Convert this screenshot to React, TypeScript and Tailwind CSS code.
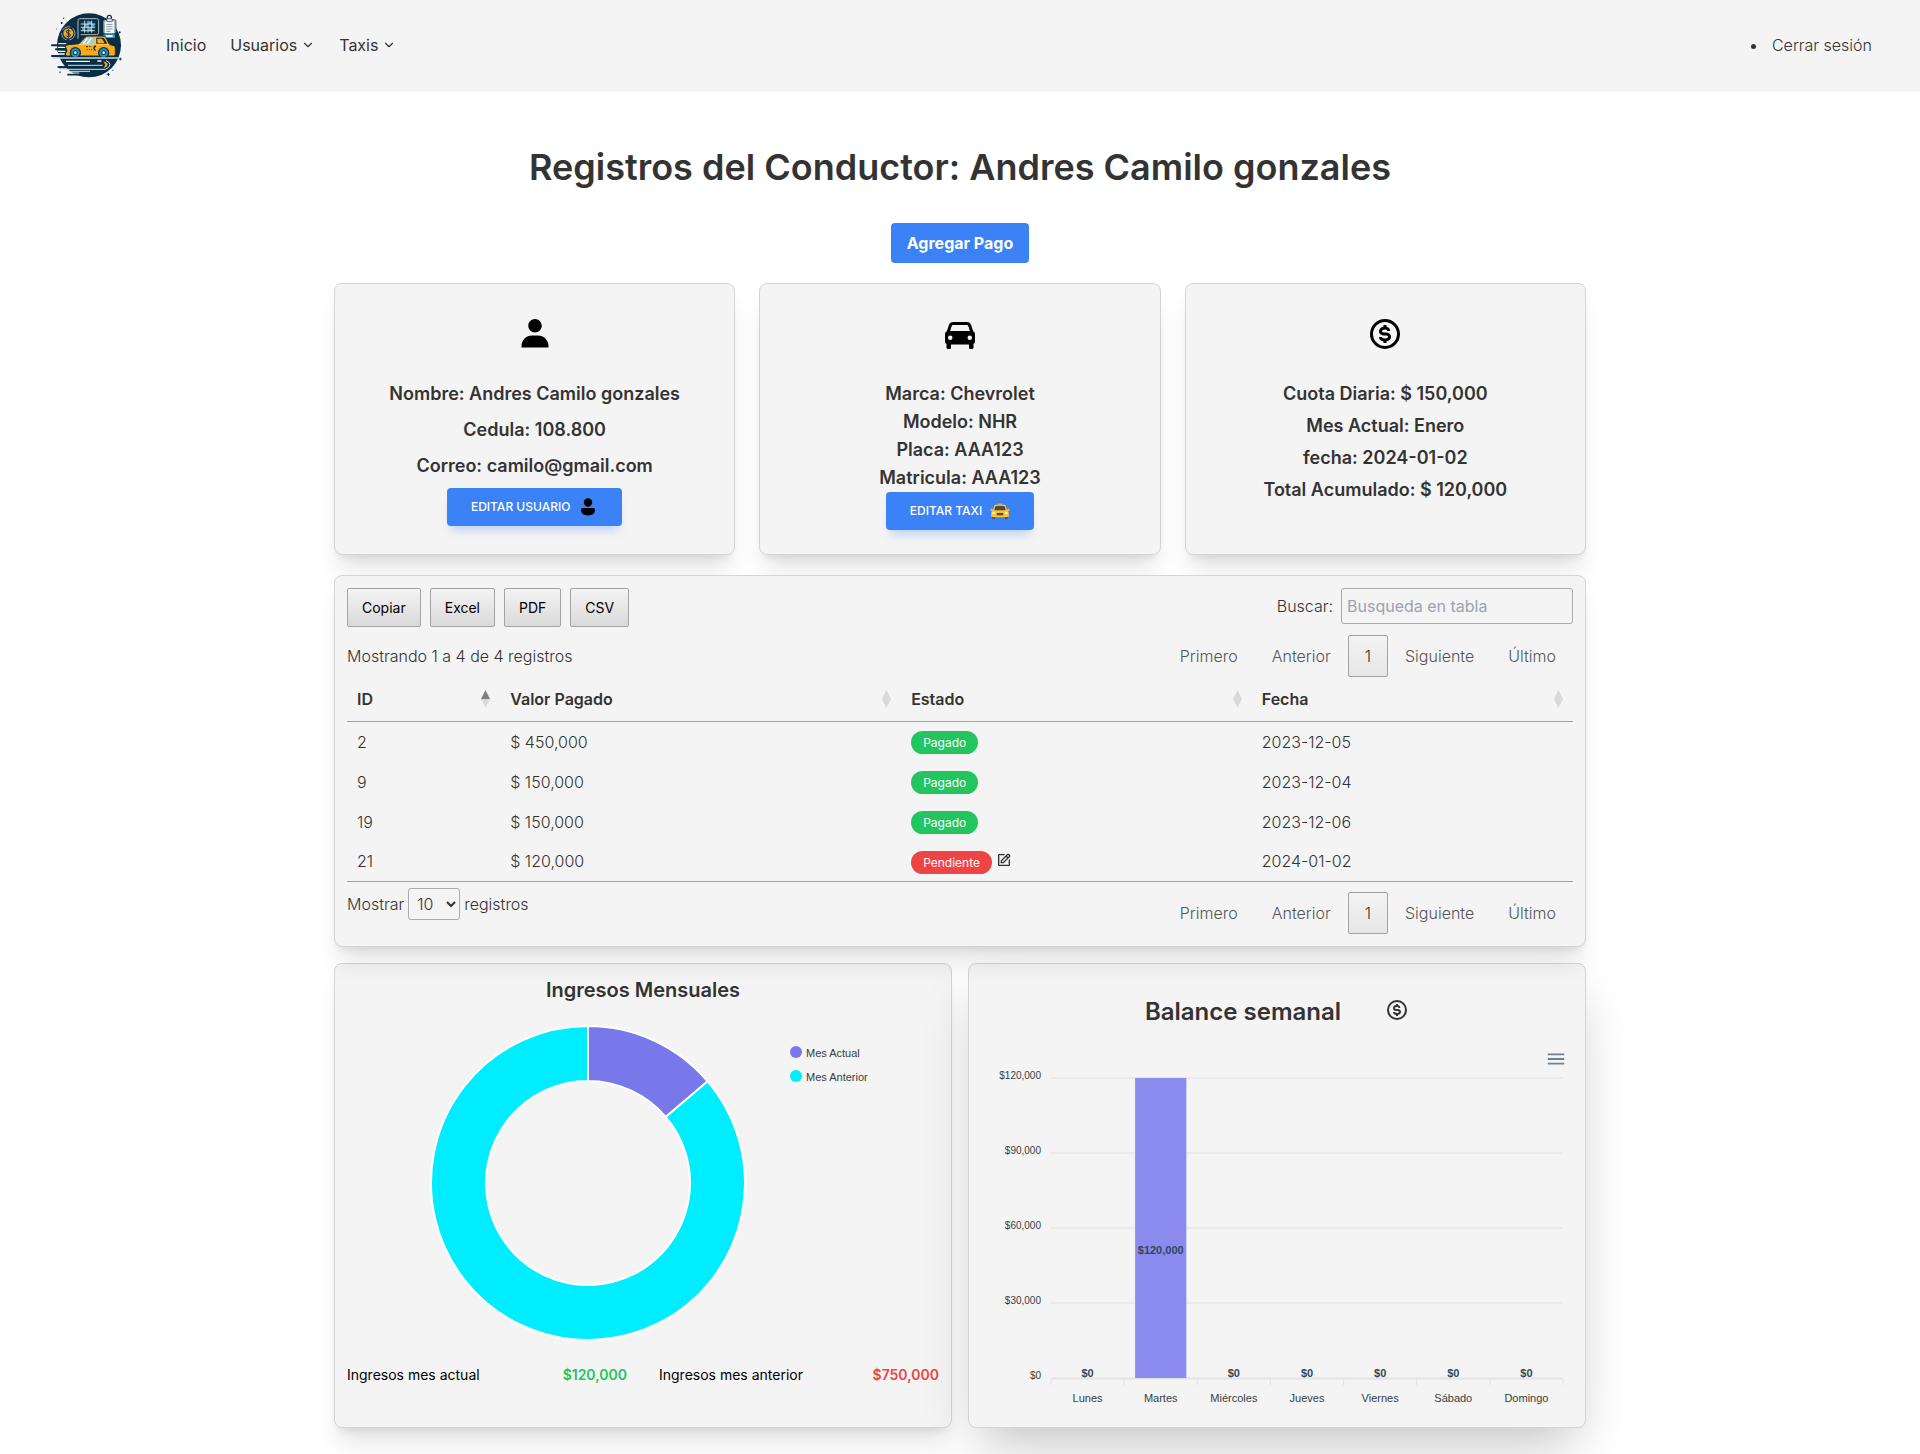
import type { ReactNode } from "react";
import { BiDollarCircle, BiEdit, BiSolidCar, BiSolidUser } from "react-icons/bi";
import { MdMenu } from "react-icons/md";
import { ChevronDown } from "lucide-react";

function Logo() {
  return (
    <svg viewBox="24 30 234 210" className="h-[70px] w-[78px]" role="img" aria-label="Logo">
      <circle cx="147" cy="136" r="96" fill="#0a2e44" />
      {/* map panel */}
      <path d="M114 116V62q0-6 6-6h50q6 0 6 6v36q0 6-6 6h-48" fill="#0a2e44" stroke="#a9bcc6" strokeWidth="3" />
      <rect x="124" y="64" width="40" height="32" fill="#123f58" />
      <path d="M134 72h8v8h-8zM146 64h8v8h-8zM156 72h8v8h-8zM146 84h8v10h-8zM126 84h7v7h-7z" fill="#3fa9d0" />
      <path d="M122 72h44M122 82h44M122 92h42M134 62v36M144 62v36M155 62v36" stroke="#e7eef1" strokeWidth="2.5" />
      {/* clipboard */}
      <path d="M202 56v-4a6 6 0 0 1 12 0v4" fill="none" stroke="#0a2e44" strokeWidth="4" />
      <rect x="189" y="59" width="39" height="42" rx="5" fill="#9fb2bd" stroke="#0a2e44" strokeWidth="2" />
      <rect x="195" y="64" width="27" height="36" rx="2" fill="#fff" />
      <rect x="200" y="56" width="17" height="9" rx="3" fill="#dfe7ea" stroke="#0a2e44" strokeWidth="2" />
      <path d="M199 73h19M199 80h19M199 87h19M199 94h12" stroke="#5f7886" strokeWidth="2.5" />
      <rect x="190" y="103" width="35" height="11" rx="3" fill="#2f9fc9" />
      <rect x="198" y="105" width="20" height="6" fill="#e7f4f9" />
      {/* coin */}
      <circle cx="85" cy="100" r="20" fill="none" stroke="#8fa6b2" strokeWidth="3" strokeDasharray="28 8" />
      <circle cx="85" cy="100" r="16" fill="#f7a81b" stroke="#0a2e44" strokeWidth="2" />
      <path d="M91 95q-2-4-6-4-6 0-6 4 0 4 6 5t6 5q0 5-6 5-5 0-7-4M85 88v25" fill="none" stroke="#0a2e44" strokeWidth="3" />
      {/* speed lines */}
      <path d="M36 136h44M48 148h26M36 168h50" stroke="#0a2e44" strokeWidth="6" strokeLinecap="round" />
      <path d="M54 142h22M54 154h22M54 162h20" stroke="#fff" strokeWidth="4" />
      <path d="M55 131h24" stroke="#fff" strokeWidth="3" />
      {/* car */}
      <path d="M76 139q2-5 10-5l31-3 18-19q4-4 10-4h44q6 0 9 5l10 20 14 4q4 2 4 8v18q0 5-5 5H82q-6 0-6-6l5-9z" fill="#fbab18" stroke="#0a2e44" strokeWidth="3" />
      <path d="M122 132l16-17q2-2 5-2h20v19z" fill="#8fd3ec" />
      <path d="M169 113h19q4 0 6 4l8 15h-33z" fill="#0a2e44" />
      <path d="M172 116h14l8 14h-22z" fill="#fbab18" />
      <path d="M130 131l12-17M142 131l12-17" stroke="#fff" strokeWidth="4" />
      <path d="M166 111v20M118 133h90" stroke="#ffe0a0" strokeWidth="2" />
      <path d="M138 140h6M148 140h4M140 149h3M147 149h3M154 149h3" stroke="#0a2e44" strokeWidth="3" />
      <path d="M168 138q-7 2-6 7 0 5 5 6" fill="none" stroke="#0a2e44" strokeWidth="4" />
      {[106, 191].map((x) => (
        <g key={x}>
          <circle cx={x} cy="158" r="17" fill="#0a2e44" />
          <circle cx={x} cy="158" r="13" fill="#2a8fbb" />
          <circle cx={x} cy="158" r="7" fill="#0a2e44" />
          <circle cx={x} cy="158" r="4" fill="#e7f4f9" />
        </g>
      ))}
      {/* road */}
      <path d="M36 174h200" stroke="#c9d5db" strokeWidth="4" />
      <path d="M78 184h72M172 183h12" stroke="#fff" strokeWidth="4" />
      <path d="M56 202h138q8-2 10-8" fill="none" stroke="#0a2e44" strokeWidth="6" />
      <path d="M84 196h104M60 208h136q12-4 14-14-2-10-12-12" fill="none" stroke="#d7e1e6" strokeWidth="3" />
      <path d="M190 184q12 4 13 10-2 7-12 10l5-10z" fill="#fbab18" />
      <path d="M54 201h52M84 224h34" stroke="#0a2e44" strokeWidth="5" strokeLinecap="round" />
      <path d="M78 214h72M88 219h30" stroke="#d7e1e6" strokeWidth="3" />
      {/* sparkles */}
      <path d="M71 53v4M62 69h6M65 66v6M49 87h2M60 119v4M236 97h6M239 94v6M241 173v8M237 177h8M205 219v9M200 223h9M217 211h3M60 214v5" stroke="#0a2e44" strokeWidth="3" />
    </svg>
  );
}

function UserGlyph() {
  return (
    <svg viewBox="0 0 20 20" className="h-5 w-5" aria-hidden="true">
      <circle cx="10" cy="5.5" r="4.2" fill="#000" />
      <path d="M4.6 11h10.8q1.6 0 1.6 1.8 0 5.6-7 5.6t-7-5.6Q3 11 4.6 11z" fill="#000" />
    </svg>
  );
}

function TaxiGlyph() {
  return (
    <svg viewBox="0 0 20 20" className="h-5 w-5" aria-hidden="true">
      <path d="M2 14.500h3.200v3.200H2zM14.800 14.500h3.200v3.200h-3.200z" fill="#37474f" />
      <rect x="7.800" y="2.200" width="4.400" height="2.400" rx="0.700" fill="#e8a500" />
      <path d="M5.600 3.800h8.800q1 0 1.400 1l1.300 4 .9-.9q1.600-.2 1.600 1-.2 1-1.500 1.100.7.900.7 2v3.200q0 1-1 1H2.200q-1 0-1-1V12q0-1.100.7-2Q.6 9.900.4 8.900q0-1.200 1.600-1l.9.900 1.300-4q.4-1 1.400-1z" fill="#fbc02d" />
      <path d="M6.200 5h7.600q.6 0 .8.600l1.200 3.600H4.200l1.200-3.600q.2-.6.800-.6z" fill="#4a4a42" />
      <circle cx="3.800" cy="12" r="1.300" fill="#fff8e1" />
      <circle cx="16.200" cy="12" r="1.300" fill="#fff8e1" />
      <rect x="6.800" y="12" width="6.400" height="2.200" rx="0.600" fill="#5d4a1a" />
    </svg>
  );
}

const cardBase = "rounded-lg border border-[#d4d4d4] bg-[#f4f4f4]";

function InfoCard({ icon, children }: { icon: ReactNode; children: ReactNode }) {
  return (
    <section className={`${cardBase} flex flex-col items-center p-6 text-lg font-semibold leading-7 shadow-xl`}>
      <div className="mb-5 p-2 text-4xl leading-none text-black">{icon}</div>
      {children}
    </section>
  );
}

function EditButton({ children }: { children: ReactNode }) {
  return (
    <button className="flex h-[38px] items-center gap-2 rounded bg-[#3b82f6] px-6 text-xs font-medium uppercase text-white shadow-[0_8px_9px_-4px_rgba(59,130,246,0.3)]">
      {children}
    </button>
  );
}

function Pagination() {
  return (
    <nav aria-label="Paginación" className="flex text-[#555]">
      <button className="h-[42px] border border-transparent px-4">Primero</button>
      <button className="h-[42px] border border-transparent px-4">Anterior</button>
      <button className="h-[42px] rounded-xs border border-[#a3a3a3] bg-linear-to-b from-[#f3f3f3] to-[#e6e6e6] px-4 text-[#333]">
        1
      </button>
      <button className="h-[42px] border border-transparent px-4">Siguiente</button>
      <button className="h-[42px] border border-transparent px-4">Último</button>
    </nav>
  );
}

function SortMark({ active }: { active: boolean }) {
  return (
    <svg viewBox="0 0 9 18" className="h-[18px] w-[9px]" aria-hidden="true">
      <path d="M4.5 0L9 9H0z" fill={active ? "#7f7f7f" : "#d9d9d9"} />
      <path d="M0 9h9l-4.500 9z" fill="#d9d9d9" />
    </svg>
  );
}

const rows = [
  { id: 2, value: "$ 450,000", paid: true, date: "2023-12-05" },
  { id: 9, value: "$ 150,000", paid: true, date: "2023-12-04" },
  { id: 19, value: "$ 150,000", paid: true, date: "2023-12-06" },
  { id: 21, value: "$ 120,000", paid: false, date: "2024-01-02" },
];

const columns = [
  { name: "ID", width: "w-[12.5%]" },
  { name: "Valor Pagado", width: "w-[32.7%]" },
  { name: "Estado", width: "w-[28.6%]" },
  { name: "Fecha", width: "w-[26.2%]" },
];

function RecordsTable() {
  return (
    <section className={`${cardBase} relative z-10 p-3 shadow-xl`}>
      <div className="flex items-start justify-between">
        <div className="flex gap-[9px]">
          {["Copiar", "Excel", "PDF", "CSV"].map((label) => (
            <button
              key={label}
              className="h-[39px] rounded-xs border border-[#a3a3a3] bg-linear-to-b from-[#f3f3f3] to-[#dadada] px-3.5 text-sm font-normal text-black"
            >
              {label}
            </button>
          ))}
        </div>
        <div className="flex items-center gap-2">
          <label htmlFor="search">Buscar:</label>
          <input
            id="search"
            type="search"
            placeholder="Busqueda en tabla"
            className="h-9 w-[232px] rounded-[3px] border border-[#aaa] bg-transparent px-[5px] font-normal placeholder:text-[#9ca3af]"
          />
        </div>
      </div>
      <div className="mt-2 flex items-center justify-between">
        <p>Mostrando 1 a 4 de 4 registros</p>
        <Pagination />
      </div>
      <table className="w-full table-fixed border-collapse text-left">
        <thead>
          <tr className="border-b border-[#a3a3a3]">
            {columns.map((c, i) => (
              <th key={c.name} className={`${c.width} p-2.5 font-semibold`}>
                <span className="flex items-center justify-between">
                  {c.name}
                  <SortMark active={i === 0} />
                </span>
              </th>
            ))}
          </tr>
        </thead>
        <tbody className="border-b border-[#a3a3a3]">
          {rows.map((r) => (
            <tr key={r.id} className="h-10">
              <td className="px-2.5">{r.id}</td>
              <td className="px-2.5">{r.value}</td>
              <td className="px-2.5">
                <div className="flex items-center gap-1">
                  {r.paid ? (
                    <span className="mt-0.5 rounded-full bg-[#22c55e] px-3 text-xs leading-[23px] font-normal text-white">Pagado</span>
                  ) : (
                    <>
                      <span className="mt-0.5 rounded-full bg-[#ef4444] px-3 text-xs leading-[23px] font-normal text-white">Pendiente</span>
                      <button aria-label="Editar pago" className="mb-0.5">
                        <BiEdit size={16} />
                      </button>
                    </>
                  )}
                </div>
              </td>
              <td className="px-2.5">{r.date}</td>
            </tr>
          ))}
        </tbody>
      </table>
      <div className="flex items-start justify-between">
        <label className="mt-1.5 flex items-center gap-1">
          Mostrar
          <select className="h-8 w-[52px] rounded-[3px] border border-[#aaa] bg-transparent p-1">
            <option>10</option>
            <option>25</option>
          </select>
          registros
        </label>
        <div className="mt-2.5">
          <Pagination />
        </div>
      </div>
    </section>
  );
}

function donutSlice(from: number, to: number) {
  const point = (r: number, a: number) => `${241 + r * Math.sin(a)} ${179 - r * Math.cos(a)}`;
  const large = to - from > Math.PI ? 1 : 0;
  return `M${point(157, from)}A157 157 0 ${large} 1 ${point(157, to)}L${point(102, to)}A102 102 0 ${large} 0 ${point(102, from)}z`;
}

function MonthlyIncome() {
  const split = (120 / 870) * 2 * Math.PI;
  return (
    <section className={`${cardBase} p-3 shadow-xl`}>
      <h2 className="text-center text-xl font-semibold">Ingresos Mensuales</h2>
      <svg viewBox="0 0 592 361" className="w-full font-['Liberation_Sans',sans-serif] font-normal" role="img" aria-label="Ingresos Mensuales">
        <path d={donutSlice(0, split)} fill="#7878ea" stroke="#fff" strokeWidth="2" />
        <path d={donutSlice(split, 2 * Math.PI)} fill="#00edff" stroke="#fff" strokeWidth="2" />
        <circle cx="449" cy="48" r="6" fill="#7878ea" />
        <circle cx="449" cy="72" r="6" fill="#00edff" />
        <g fill="#373d3f" fontSize="11">
          <text x="459" y="53">Mes Actual</text>
          <text x="459" y="77">Mes Anterior</text>
        </g>
      </svg>
      <div className="grid grid-cols-2 gap-8 text-sm font-normal text-black">
        <p className="flex justify-between">
          Ingresos mes actual <span className="font-semibold text-[#22c55e]">$120,000</span>
        </p>
        <p className="flex justify-between">
          Ingresos mes anterior <span className="font-semibold text-[#ef4444]">$750,000</span>
        </p>
      </div>
    </section>
  );
}

const days = ["Lunes", "Martes", "Miércoles", "Jueves", "Viernes", "Sábado", "Domingo"];
const ticks = ["$120,000", "$90,000", "$60,000", "$30,000", "$0"];

function WeeklyBalance() {
  const step = 512 / 7;
  return (
    <section className={`${cardBase} p-3 shadow-2xl`}>
      <div className="mt-5 flex items-center justify-center gap-11">
        <h2 className="text-2xl font-semibold">Balance semanal</h2>
        <BiDollarCircle size={24} className="mb-1" />
      </div>
      <div className="relative mt-4">
        <button aria-label="Menú" className="absolute top-1 right-1.5 text-[#6e8192]">
          <MdMenu size={22} />
        </button>
        <svg viewBox="0 0 592 371" className="w-full font-['Liberation_Sans',sans-serif] font-normal" role="img" aria-label="Balance semanal">
          {ticks.map((t, i) => (
            <g key={t}>
              <path d={`M70 ${34 + i * 75}h512`} stroke="#e0e0e0" />
              <text x="60" y={35 + i * 75} textAnchor="end" fontSize="10" fill="#373d3f">
                {t}
              </text>
            </g>
          ))}
          {[0, 1, 2, 3, 4, 5, 6, 7].map((i) => (
            <path key={i} d={`M${70 + i * step} 335v6`} stroke="#e0e0e0" />
          ))}
          <path d="M70 335h512" stroke="#e0e0e0" />
          <rect x={70 + step * 1.15} y="34" width={step * 0.7} height="300" fill="#8b8bee" />
          {days.map((d, i) => (
            <g key={d} textAnchor="middle" fontSize="11">
              <text x={70 + step * (i + 0.5)} y={d === "Martes" ? 210 : 333} fontWeight="600" fill="#304758">
                {d === "Martes" ? "$120,000" : "$0"}
              </text>
              <text x={70 + step * (i + 0.5)} y="358" fill="#373d3f">
                {d}
              </text>
            </g>
          ))}
        </svg>
      </div>
    </section>
  );
}

export default function App() {
  return (
    <div className="min-h-screen bg-white font-['Inter',sans-serif] font-light text-[#333]">
      <header className="flex items-center border-b border-[#ececec] bg-[#f4f4f4] px-12 py-2.5">
        <a href="#" className="mr-10">
          <Logo />
        </a>
        <nav className="flex flex-1 items-center gap-6 font-normal">
          <a href="#">Inicio</a>
          <button className="flex items-center gap-1">
            Usuarios <ChevronDown size={14} />
          </button>
          <button className="flex items-center gap-1">
            Taxis <ChevronDown size={14} />
          </button>
        </nav>
        <ul className="list-disc">
          <li className="pl-1">
            <a href="#">Cerrar sesión</a>
          </li>
        </ul>
      </header>

      <main className="mx-auto max-w-7xl px-3.5 pt-14 pb-6">
        <h1 className="text-center text-4xl font-semibold">Registros del Conductor: Andres Camilo gonzales</h1>
        <div className="mt-9 flex justify-center">
          <button className="rounded bg-[#3b82f6] px-4 py-2 font-bold text-white">Agregar Pago</button>
        </div>

        <div className="mt-5 grid grid-cols-3 gap-6">
          <InfoCard icon={<BiSolidUser />}>
            <div className="flex flex-col items-center gap-2">
              <p>Nombre: Andres Camilo gonzales</p>
              <p>Cedula: 108.800</p>
              <p>Correo: camilo@gmail.com</p>
              <EditButton>
                Editar Usuario <UserGlyph />
              </EditButton>
            </div>
          </InfoCard>
          <InfoCard icon={<BiSolidCar />}>
            <p>Marca: Chevrolet</p>
            <p>Modelo: NHR</p>
            <p>Placa: AAA123</p>
            <p>Matricula: AAA123</p>
            <EditButton>
              Editar Taxi <TaxiGlyph />
            </EditButton>
          </InfoCard>
          <InfoCard icon={<BiDollarCircle />}>
            <div className="flex flex-col items-center gap-1">
              <p>Cuota Diaria: $ 150,000</p>
              <p>Mes Actual: Enero</p>
              <p>fecha: 2024-01-02</p>
              <p>Total Acumulado: $ 120,000</p>
            </div>
          </InfoCard>
        </div>

        <div className="mt-5">
          <RecordsTable />
        </div>

        <div className="mt-4 grid grid-cols-2 gap-4">
          <MonthlyIncome />
          <WeeklyBalance />
        </div>
      </main>
    </div>
  );
}
